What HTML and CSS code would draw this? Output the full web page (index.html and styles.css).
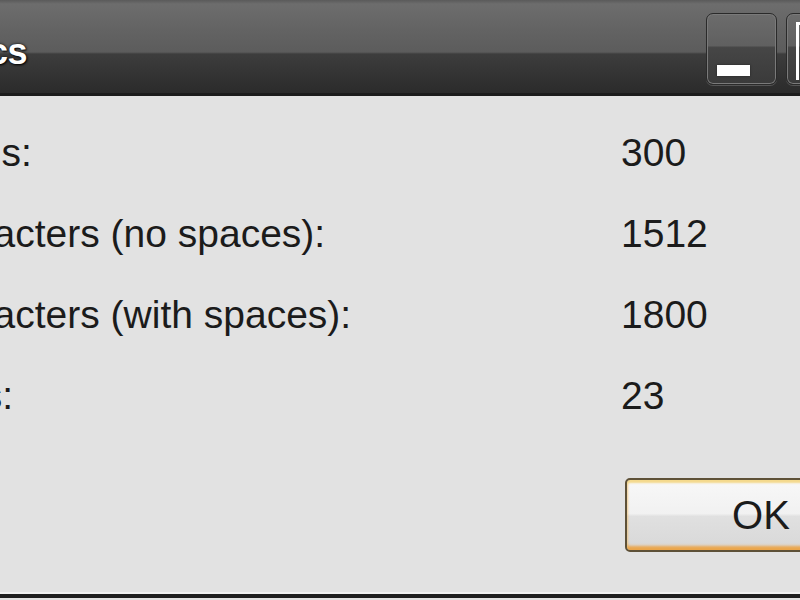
FILE: index.html
```html
<!DOCTYPE html>
<html>
<head>
<meta http-equiv="Content-Type" content="text/html; charset=utf-8"/>
<title>Statistics</title>
<link rel="stylesheet" href="styles.css">
</head>
<body>
<div class="window">
  <div class="titlebar">
    <div class="title">Statistics</div>
    <div class="caption">
      <div class="cbtn min"><span class="min-glyph"></span></div>
      <div class="cbtn max"><span class="max-glyph"></span></div>
      <div class="cbtn close"></div>
    </div>
  </div>

  <div class="client">
    <div class="stats">
      <div class="label">Words:</div><div class="value">300</div>
      <div class="label">Characters (no spaces):</div><div class="value">1512</div>
      <div class="label">Characters (with spaces):</div><div class="value">1800</div>
      <div class="label">Lines:</div><div class="value">23</div>
    </div>
    <div class="buttons">
      <div class="btn default">OK</div>
    </div>
  </div>
</div>
</body>
</html>
```

FILE: styles.css
```css
html, body {
  margin: 0;
  padding: 0;
  overflow: hidden;
  background-color: #e2e2e2;
}

body {
  width: 800px;
  height: 600px;
}

.window {
  margin-left: -140px;
  width: 1137px;
  font-family: "Liberation Sans", Arial, sans-serif;
}

/* dark glass title bar */
.titlebar {
  height: 93px;
  display: flex;
  align-items: flex-start;
  border-bottom: 3px solid #1c1c1c;
  background: linear-gradient(to bottom, #5a5a5a 0px, #6d6d6d 4px, #636363 30px, #5c5c5c 52px, #3d3d3d 54px, #333 75px, #2b2b2b 93px);
}

.title {
  flex: 1;
  padding: 31px 0 0 12px;
  font-size: 36px;
  font-weight: bold;
  color: #fff;
  letter-spacing: -0.5px;
  text-shadow: 0 0 3px #111, 1px 1px 2px #000;
}

.caption {
  display: flex;
  gap: 9px;
  padding: 13px 11px 0 0;
}

.cbtn {
  position: relative;
  width: 69px;
  height: 70px;
  border: 1px solid #2a2a2a;
  border-radius: 7px;
  box-shadow: inset 0 0 0 1px #7a7a7a, 0 1px 0 #555;
  background: linear-gradient(to bottom, #6c6c6c 0%, #606060 45%, #464646 48%, #3a3a3a 100%);
}

.cbtn.close {
  width: 118px;
}

.min-glyph {
  position: absolute;
  left: 10px;
  top: 51px;
  width: 33px;
  height: 11px;
  background-color: #fff;
  box-shadow: 0 0 2px #222;
}

.max-glyph {
  position: absolute;
  left: 9px;
  top: 8px;
  width: 34px;
  height: 58px;
  border-left: 3px solid #fff;
  border-top: 3px solid #fff;
  box-sizing: border-box;
}

/* dialog body */
.client {
  height: 498px;
  border-bottom: 2px solid #f0f0f0;
  box-shadow: 0 4px 0 #1e1e1e;
  background-color: #e2e2e2;
  padding-top: 16px;
  box-sizing: border-box;
}

.stats {
  display: grid;
  grid-template-columns: 712px auto;
  padding-left: 49px;
  font-size: 39px;
  line-height: 81px;
  color: #1b1b1b;
}

.buttons {
  display: flex;
  padding: 42px 0 0 765px;
}

.btn {
  width: 268px;
  height: 70px;
  border: 2px solid #5e5138;
  border-radius: 5px;
  font-size: 40px;
  line-height: 70px;
  text-align: center;
  color: #1b1b1b;
  box-shadow: inset 0 3px 2px #f4d98c, inset 0 -4px 3px #eba54a;
  background: linear-gradient(to bottom, #f8f8f8 0%, #f1f1f1 48%, #e0e0e0 52%, #d8d8d8 100%);
}
```
